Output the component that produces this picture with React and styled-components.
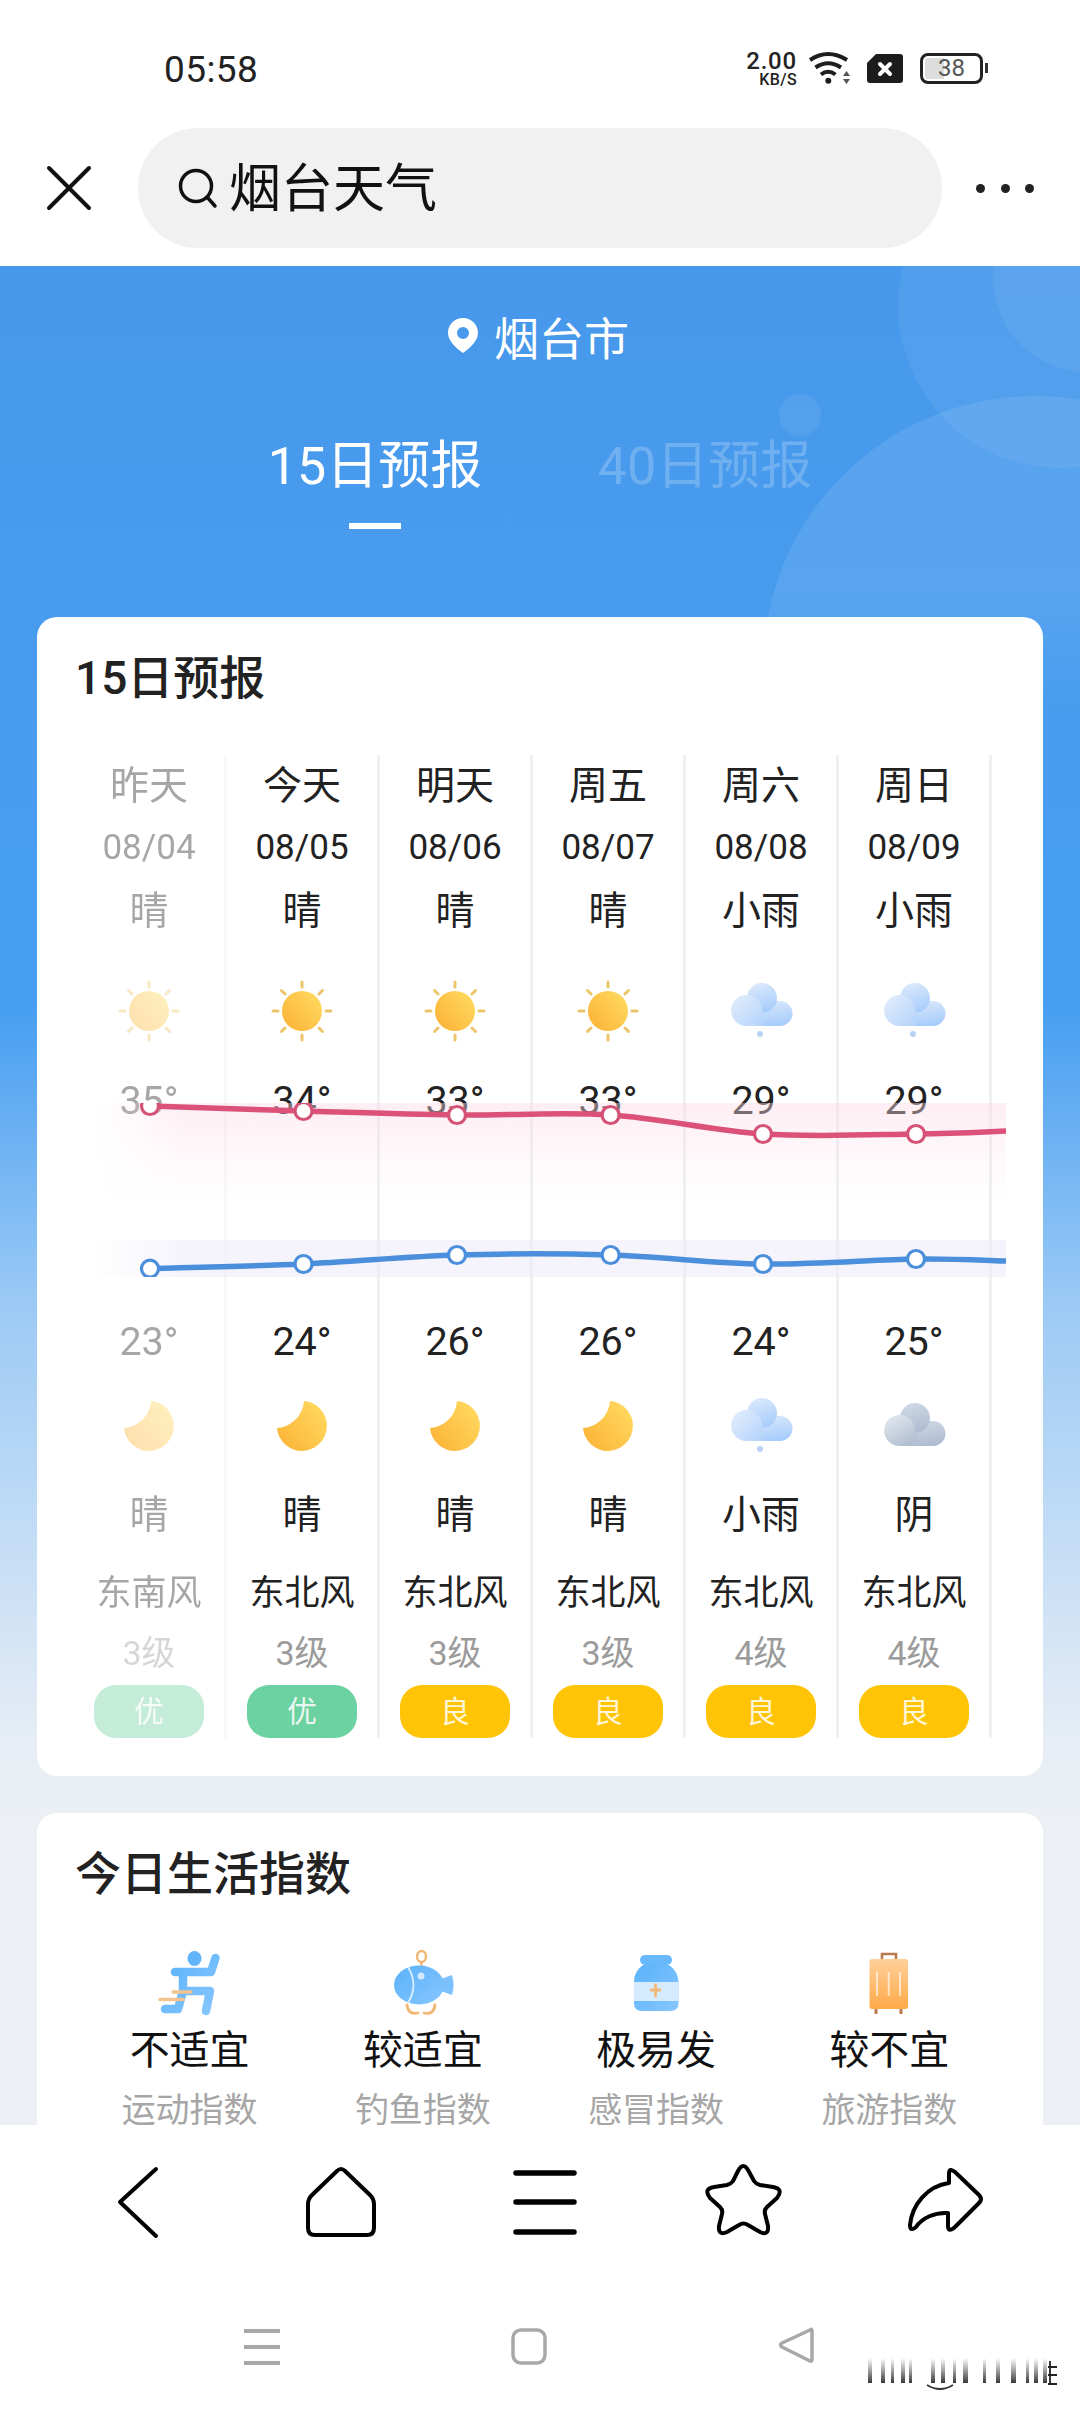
import React from "react";
import styled, { createGlobalStyle } from "styled-components";

const FONT = `Roboto, "Noto Sans CJK SC", sans-serif`;

const Global = createGlobalStyle`
  html, body { margin: 0; padding: 0; background: #fff; }
  * { box-sizing: border-box; }
  body { font-family: ${FONT}; }
`;

const Page = styled.div`
  width: 1080px;
  height: 2412px;
  display: flex;
  flex-direction: column;
  overflow: hidden;
  background: #fff;
  position: relative;
`;

/* ---------- top ---------- */
const Top = styled.header`
  height: 266px;
  flex: none;
  background: #fff;
`;
const StatusBar = styled.div`
  height: 128px;
  padding: 8px 93px 0 164px;
  display: flex;
  align-items: center;
  justify-content: space-between;
`;
const Clock = styled.span`
  font-size: 37px;
  color: #222;
  letter-spacing: 0.4px;
  margin-top: 3px;
`;
const StatusRight = styled.div`
  display: flex;
  align-items: center;
  gap: 17px;
`;
const Speed = styled.div`
  width: 50px;
  margin-right: -6px;
  display: flex;
  flex-direction: column;
  align-items: flex-end;
  color: #222;
  font-weight: 500;
`;
const SpeedValue = styled.span`
  display: block;
  height: 23px;
  font-size: 24px;
  line-height: 23px;
  letter-spacing: 0.8px;
`;
const SpeedUnit = styled.span`
  display: block;
  height: 14px;
  font-size: 16px;
  line-height: 14px;
  letter-spacing: 0.4px;
`;
const Battery = styled.div`
  position: relative;
  width: 63px;
  height: 31px;
  margin-right: 4px;
  border: 3px solid #222;
  border-radius: 8px;
  background: linear-gradient(90deg, #ddd 0, #ddd 36%, #fff 36%) content-box;
  padding: 2px;
  display: flex;
  align-items: center;
  justify-content: center;
  font-size: 24px;
  color: #555;
  &::after {
    content: "";
    position: absolute;
    right: -8px;
    top: 7px;
    width: 3px;
    height: 10px;
    background: #333;
  }
`;
const SearchRow = styled.div`
  height: 120px;
  padding-left: 46px;
  display: flex;
  align-items: center;
`;
const CloseIcon = styled.svg`
  width: 46px;
  height: 46px;
  flex: none;
  margin-right: 46px;
`;
const SearchPill = styled.div`
  width: 804px;
  height: 120px;
  flex: none;
  border-radius: 60px;
  background: #f1f1f1;
  display: flex;
  align-items: center;
  padding-left: 37px;
  gap: 8px;
`;
const SearchIcon = styled.svg`
  width: 46px;
  height: 46px;
  flex: none;
`;
const SearchText = styled.span`
  font-size: 52px;
  line-height: 60px;
  margin-top: 4px;
  color: #111;
`;
const Dots = styled.div`
  margin-left: 34px;
  display: flex;
  gap: 15.5px;
`;
const Dot = styled.span`
  width: 9px;
  height: 9px;
  border-radius: 50%;
  background: #222;
`;

/* ---------- hero ---------- */
const Hero = styled.main`
  position: relative;
  flex: none;
  height: 1859px;
  overflow: hidden;
  padding: 0 37px;
  background: linear-gradient(
    180deg,
    #4798eb 0%,
    #489ff1 40%,
    #9ccaf5 56%,
    #e8eef5 80%,
    #edf1f5 85%,
    #edf1f5 100%
  );
`;
const Decor = styled.svg`
  position: absolute;
  left: 0;
  top: 0;
  width: 1080px;
  height: 460px;
`;
const City = styled.div`
  position: relative;
  height: 60px;
  margin-top: 40px;
  padding-right: 4px;
  display: flex;
  align-items: center;
  justify-content: center;
  gap: 15px;
  color: #fff;
  font-size: 45px;
`;
const PinIcon = styled.svg`
  width: 32px;
  height: 36px;
  flex: none;
`;
const Tabs = styled.div`
  position: relative;
  margin-top: 66px;
  height: 98px;
  display: flex;
  justify-content: center;
  gap: 116px;
`;
const Tab = styled.div`
  display: flex;
  flex-direction: column;
  align-items: center;
  width: 214px;
  font-size: 52px;
  line-height: 70px;
  white-space: nowrap;
  color: ${(p) => (p.$active ? "#fff" : "rgba(255,255,255,.22)")};
`;
const TabLine = styled.span`
  width: 52px;
  height: 6px;
  margin-top: 21px;
  background: #fff;
`;
const Card = styled.section`
  position: relative;
  background: #fff;
  border-radius: 20px;
  padding: 26px 38px 38px 35px;
  margin-bottom: 37px;
`;
const Forecast = styled(Card)`
  margin-top: 87px;
`;
const CardTitle = styled.h2`
  margin: 0 0 0 3px;
  height: 70px;
  line-height: 70px;
  font-size: 46px;
  font-weight: 500;
  color: #222;
`;
const DaysArea = styled.div`
  position: relative;
  margin-top: 42px;
  padding-left: 2px;
  width: 934px;
  overflow: hidden;
  display: flex;
`;
const Day = styled.div`
  width: 153px;
  flex: none;
  display: flex;
  flex-direction: column;
  align-items: center;
  border-right: 3px solid #eef0f3;
  opacity: ${(p) => (p.$faded ? 0.4 : 1)};
  color: #222;
`;
const DayName = styled.div`
  height: 62px;
  line-height: 62px;
  font-size: 39px;
`;
const DateText = styled.div`
  height: 62px;
  line-height: 62px;
  font-size: 35px;
`;
const Cond = styled.div`
  height: ${(p) => p.$h}px;
  line-height: ${(p) => p.$h}px;
  font-size: 39px;
`;
const IconSlot = styled.div`
  height: ${(p) => p.$h}px;
  display: flex;
  align-items: center;
  justify-content: center;
`;
const WeatherSvg = styled.svg`
  width: 64px;
  height: 64px;
`;
const Temp = styled.div`
  height: 42px;
  line-height: 44px;
  font-size: 39.5px;
  margin-top: ${(p) => p.$mt || 0}px;
`;
const Wind = styled.div`
  height: 62px;
  line-height: 62px;
  margin-top: 23px;
  font-size: 35px;
  white-space: nowrap;
`;
const Level = styled.div`
  height: 54px;
  line-height: 56px;
  font-size: 34px;
  color: #9b9b9b;
`;
const Quality = styled.div`
  width: 110px;
  height: 53px;
  margin-top: 6px;
  border-radius: 22px;
  background: ${(p) => p.$bg};
  color: rgba(255, 255, 255, 0.85);
  font-size: 30px;
  line-height: 53px;
  text-align: center;
`;
const Chart = styled.svg`
  position: absolute;
  left: 0;
  top: 348px;
  width: 934px;
  height: 174px;
`;

/* ---------- life ---------- */
const LifeGrid = styled.div`
  display: grid;
  grid-template-columns: repeat(4, 233.25px);
  margin-left: 1px;
  margin-top: 40px;
`;
const LifeItem = styled.div`
  display: flex;
  flex-direction: column;
  align-items: center;
`;
const LifeIcon = styled.svg`
  width: 80px;
  height: 70px;
`;
const LifeValue = styled.div`
  margin-top: 6px;
  height: 50px;
  line-height: 52px;
  font-size: 40px;
  color: #111;
`;
const LifeLabel = styled.div`
  margin-top: 10px;
  height: 50px;
  line-height: 50px;
  font-size: 34px;
  color: #a6a6a6;
`;

/* ---------- bottom ---------- */
const Bottom = styled.footer`
  flex: 1;
  background: #fff;
`;
const Toolbar = styled.nav`
  margin-top: 35px;
  padding: 0 36.5px;
  display: grid;
  grid-template-columns: repeat(5, 203px);
  justify-items: center;
`;
const ToolIcon = styled.svg`
  width: 90px;
  height: 80px;
  fill: none;
  stroke: #000;
  stroke-width: 4;
  stroke-linecap: round;
  stroke-linejoin: round;
`;
const SystemBar = styled.nav`
  margin-top: 86px;
  padding-left: 128px;
  display: grid;
  grid-template-columns: repeat(3, 267px);
  justify-items: center;
`;
const SysIcon = styled.svg`
  width: 40px;
  height: 40px;
  fill: none;
  stroke: #a8a8a8;
  stroke-width: 3.5;
  stroke-linejoin: round;
`;
const Watermark = styled.svg`
  position: absolute;
  left: 855px;
  top: 2355px;
  width: 210px;
  height: 40px;
`;
const HiddenDefs = styled.svg`
  position: absolute;
  width: 0;
  height: 0;
`;

/* ---------- drawings ---------- */
const Defs = () => (
  <HiddenDefs aria-hidden="true">
    <defs>
      <linearGradient id="gSun" x1="0" y1="1" x2="1" y2="0.2">
        <stop offset="0" stopColor="#fbb034" />
        <stop offset="1" stopColor="#ffd95e" />
      </linearGradient>
      <linearGradient id="gCloudBack" x1="0.3" y1="0" x2="0.6" y2="1">
        <stop offset="0" stopColor="#dbe9fc" />
        <stop offset="1" stopColor="#a6ccfb" />
      </linearGradient>
      <linearGradient id="gCloudFront" x1="0" y1="0" x2="1" y2="1">
        <stop offset="0" stopColor="#e4eefc" />
        <stop offset="1" stopColor="#b4d3fb" />
      </linearGradient>
      <linearGradient id="gGreyBack" x1="0.3" y1="0" x2="0.6" y2="1">
        <stop offset="0" stopColor="#cfd9e6" />
        <stop offset="1" stopColor="#aebcd0" />
      </linearGradient>
      <linearGradient id="gGreyFront" x1="0" y1="0" x2="0.6" y2="1">
        <stop offset="0" stopColor="#e6ebf1" />
        <stop offset="1" stopColor="#b4c0d2" />
      </linearGradient>
      <linearGradient id="gBlue" x1="0" y1="0" x2="1" y2="1">
        <stop offset="0" stopColor="#5ab2fa" />
        <stop offset="1" stopColor="#86c6ff" />
      </linearGradient>
      <linearGradient id="gCase" x1="0" y1="0" x2="0" y2="1">
        <stop offset="0" stopColor="#ffd09a" />
        <stop offset="1" stopColor="#ffa948" />
      </linearGradient>
      <linearGradient id="gRed" x1="0" y1="0" x2="0" y2="1">
        <stop offset="0" stopColor="#fbd9e5" stopOpacity="0.45" />
        <stop offset="0.45" stopColor="#fbd9e5" stopOpacity="0.22" />
        <stop offset="1" stopColor="#fbd9e5" stopOpacity="0" />
      </linearGradient>
      <linearGradient id="gFade" x1="0" y1="0" x2="1" y2="0">
        <stop offset="0.025" stopColor="#fff" stopOpacity="0" />
        <stop offset="0.12" stopColor="#fff" stopOpacity="1" />
      </linearGradient>
      <linearGradient id="gStreak" x1="0" y1="0" x2="0" y2="1">
        <stop offset="0" stopColor="#333" stopOpacity="0" />
        <stop offset="1" stopColor="#222" stopOpacity="0.9" />
      </linearGradient>
      <linearGradient id="gDecor" gradientUnits="userSpaceOnUse" x1="0" y1="320" x2="0" y2="450">
        <stop offset="0" stopColor="#fff" stopOpacity="0.095" />
        <stop offset="1" stopColor="#fff" stopOpacity="0" />
      </linearGradient>
      <mask id="mFade" maskUnits="userSpaceOnUse" x="0" y="0" width="934" height="174">
        <rect width="934" height="174" fill="url(#gFade)" />
      </mask>
    </defs>
  </HiddenDefs>
);

const Sun = () => {
  const rays = [0, 45, 90, 135, 180, 225, 270, 315];
  return (
    <WeatherSvg viewBox="0 0 64 64">
      {rays.map((a) => (
        <line
          key={a}
          x1="32"
          y1="3"
          x2="32"
          y2="8"
          stroke="#ecc56a"
          strokeWidth="3"
          strokeLinecap="round"
          transform={`rotate(${a} 32 32)`}
        />
      ))}
      <circle cx="32" cy="32" r="20" fill="url(#gSun)" />
    </WeatherSvg>
  );
};

const Moon = () => (
  <WeatherSvg viewBox="0 0 64 64">
    <path d="M34 7 A25 25 0 1 1 7 34 A29 29 0 0 0 34 7 Z" fill="url(#gSun)" />
  </WeatherSvg>
);

const Cloud = ({ grey, rain, dy = 0 }) => {
  const back = grey ? "url(#gGreyBack)" : "url(#gCloudBack)";
  const front = grey ? "url(#gGreyFront)" : "url(#gCloudFront)";
  return (
    <WeatherSvg viewBox="0 0 64 64">
      <g transform={`translate(0 ${dy})`}>
        <path d="M18 47 H51 A12.5 12.5 0 0 0 51 22 L30 22 Z" fill={back} />
        <circle cx="33" cy="19" r="15" fill={back} />
        <path d="M18 47 A15.5 15.5 0 1 1 33 30 C35 36 34 47 34 47 Z" fill={front} />
      </g>
      {rain && <circle cx="31" cy="55" r="3" fill="#b8d2f4" />}
    </WeatherSvg>
  );
};

const iconFor = { sun: <Sun />, moon: <Moon />, rain: <Cloud rain />, cloud: <Cloud grey dy={5} /> };

/* Catmull-Rom through the day points */
const smooth = (pts) =>
  pts.reduce((d, [x, y], i) => {
    if (i === 0) return `M${x} ${y}`;
    const p0 = pts[Math.max(i - 2, 0)];
    const p1 = pts[i - 1];
    const p3 = pts[Math.min(i + 1, pts.length - 1)];
    const c1x = p1[0] + (x - p0[0]) / 6;
    const c1y = p1[1] + (y - p0[1]) / 6;
    const c2x = x - (p3[0] - p1[0]) / 6;
    const c2y = y - (p3[1] - p1[1]) / 6;
    return `${d} C${c1x} ${c1y} ${c2x} ${c2y} ${x} ${y}`;
  }, "");

const xs = [78, 231.5, 385, 538.6, 691, 844, 934];
const redPts = [3, 8, 12, 12, 31, 31, 28].map((y, i) => [xs[i], y]);
const bluePts = [165.6, 161, 152, 152, 161, 156, 158].map((y, i) => [xs[i], y]);

const TempChart = () => (
  <Chart viewBox="0 0 934 174">
    <g mask="url(#mFade)">
      <rect x="0" y="0" width="934" height="100" fill="url(#gRed)" />
      <rect x="20" y="137" width="914" height="37" fill="#ece9fa" fillOpacity="0.5" />
    </g>
    <path d={smooth(redPts)} fill="none" stroke="#dc5178" strokeWidth="5.5" />
    <path d={smooth(bluePts)} fill="none" stroke="#4b8fdc" strokeWidth="5.5" />
    {redPts.slice(0, 6).map(([x, y]) => (
      <circle key={x} cx={x} cy={y} r="8.5" fill="#fff" stroke="#d55277" strokeWidth="3.2" />
    ))}
    {bluePts.slice(0, 6).map(([x, y]) => (
      <circle key={x} cx={x} cy={y} r="8.5" fill="#fff" stroke="#4b8fdc" strokeWidth="3.2" />
    ))}
  </Chart>
);

const days = [
  { name: "昨天", date: "08/04", c1: "晴", i1: "sun", hi: 35, lo: 23, i2: "moon", c2: "晴", wind: "东南风", lv: "3级", q: "优", faded: true },
  { name: "今天", date: "08/05", c1: "晴", i1: "sun", hi: 34, lo: 24, i2: "moon", c2: "晴", wind: "东北风", lv: "3级", q: "优" },
  { name: "明天", date: "08/06", c1: "晴", i1: "sun", hi: 33, lo: 26, i2: "moon", c2: "晴", wind: "东北风", lv: "3级", q: "良" },
  { name: "周五", date: "08/07", c1: "晴", i1: "sun", hi: 33, lo: 26, i2: "moon", c2: "晴", wind: "东北风", lv: "3级", q: "良" },
  { name: "周六", date: "08/08", c1: "小雨", i1: "rain", hi: 29, lo: 24, i2: "rain", c2: "小雨", wind: "东北风", lv: "4级", q: "良" },
  { name: "周日", date: "08/09", c1: "小雨", i1: "rain", hi: 29, lo: 25, i2: "cloud", c2: "阴", wind: "东北风", lv: "4级", q: "良" },
];

const RunnerIcon = () => (
  <LifeIcon viewBox="0 0 80 70">
    <ellipse cx="44.5" cy="9.5" rx="7" ry="7.5" fill="#62b5fb" />
    <path
      d="M65.5 9 L61 23 H25 M33 24 L33 42 H60 L56 62 M33 42 L28 60 H15"
      fill="none"
      stroke="url(#gBlue)"
      strokeWidth="8.5"
      strokeLinecap="round"
      strokeLinejoin="round"
    />
    <path d="M23 43 H41 M10 50.5 H33" stroke="#f3c48f" strokeWidth="3.5" strokeLinecap="round" />
  </LifeIcon>
);

const FishIcon = () => (
  <LifeIcon viewBox="0 0 80 70">
    <ellipse cx="38.5" cy="7.5" rx="4.5" ry="5.5" fill="none" stroke="#f2b777" strokeWidth="2.4" />
    <path d="M38.500 13 V19" stroke="#f2b777" strokeWidth="2.4" />
    <path d="M58 30 L69 26 Q72 36 69 46 L58 42 Z" fill="#7cc0fd" />
    <ellipse cx="36" cy="36" rx="25" ry="19.5" fill="url(#gBlue)" />
    <path d="M25 18 Q36 36 25 54" fill="none" stroke="#dceeff" strokeWidth="1.8" />
    <circle cx="38" cy="27" r="3.5" fill="#d2e9ff" />
    <path d="M24 56 Q25 66 35 64 M52 56 Q51 66 41 64" fill="none" stroke="#f2b777" strokeWidth="2.8" strokeLinecap="round" />
  </LifeIcon>
);

const BottleIcon = () => (
  <LifeIcon viewBox="0 0 80 70">
    <rect x="24" y="6" width="32" height="10" rx="5" fill="#68b8fc" />
    <path d="M27 16 H53 Q62 22 62.500 33 V54 Q62.500 62 54 62 H26 Q18 62 18 54 V33 Q18 22 27 16 Z" fill="url(#gBlue)" />
    <rect x="18" y="33" width="44.500" height="19" fill="#d5ebff" />
    <path d="M39.500 36 V47 M35 41 H44" stroke="#f2b777" strokeWidth="2.8" strokeLinecap="round" />
  </LifeIcon>
);

const SuitcaseIcon = () => (
  <LifeIcon viewBox="0 0 80 70">
    <path d="M33 11 V5 H47 V11" fill="none" stroke="#b77a4c" strokeWidth="2.600" />
    <path d="M27 58 V65 M52 58 V65" stroke="#b77a4c" strokeWidth="3" />
    <rect x="20.500" y="10" width="38.500" height="50" rx="2.500" fill="url(#gCase)" />
    <path d="M28 23 V47 M39.700 23 V47 M51 23 V47" stroke="#fff" strokeOpacity="0.6" strokeWidth="2" />
  </LifeIcon>
);

const streaks = [
  [13, 4], [26, 4], [36, 3], [46, 4], [54, 3], [76, 4], [86, 4], [98, 3], [108, 5], [128, 3],
  [141, 4], [156, 5], [171, 3], [179, 4], [188, 4],
];

const lifeItems = [
  { icon: <RunnerIcon />, value: "不适宜", label: "运动指数" },
  { icon: <FishIcon />, value: "较适宜", label: "钓鱼指数" },
  { icon: <BottleIcon />, value: "极易发", label: "感冒指数" },
  { icon: <SuitcaseIcon />, value: "较不宜", label: "旅游指数" },
];

export default function App() {
  return (
    <Page>
      <Global />
      <Defs />
      <Top>
        <StatusBar>
          <Clock>05:58</Clock>
          <StatusRight>
            <Speed>
              <SpeedValue>2.00</SpeedValue>
              <SpeedUnit>KB/S</SpeedUnit>
            </Speed>
            <svg width="42" height="34" viewBox="0 0 42 34">
              <path d="M2 9 Q20 -3 39 9 M7.500 16.500 Q20 8 33 16.500 M13 23.500 Q20 18 27.500 23.500" fill="none" stroke="#1d1d1d" strokeWidth="4" />
              <circle cx="20.300" cy="29.700" r="3" fill="#1d1d1d" />
              <path d="M38.500 20 L42 25 H35 Z M38.500 33 L42 28 H35 Z" fill="#555" />
            </svg>
            <svg width="36" height="29" viewBox="0 0 36 29">
              <path d="M9 0 H33 Q36 0 36 3 V26 Q36 29 33 29 H3 Q0 29 0 26 V9 Z" fill="#1c1c1c" />
              <path d="M13 10 L23 20 M23 10 L13 20" stroke="#fff" strokeWidth="4" strokeLinecap="round" />
            </svg>
            <Battery>38</Battery>
          </StatusRight>
        </StatusBar>
        <SearchRow>
          <CloseIcon viewBox="0 0 46 46">
            <path d="M3 3 L43 43 M43 3 L3 43" stroke="#111" strokeWidth="4" strokeLinecap="round" />
          </CloseIcon>
          <SearchPill>
            <SearchIcon viewBox="0 0 46 46">
              <circle cx="21" cy="21" r="15.500" fill="none" stroke="#111" strokeWidth="3.500" />
              <path d="M32 32 L40 41" stroke="#111" strokeWidth="3.500" strokeLinecap="round" />
            </SearchIcon>
            <SearchText>烟台天气</SearchText>
          </SearchPill>
          <Dots>
            <Dot />
            <Dot />
            <Dot />
          </Dots>
        </SearchRow>
      </Top>

      <Hero>
        <Decor viewBox="0 0 1080 460">
          <circle cx="1060" cy="40" r="162" fill="#fff" fillOpacity="0.06" />
          <circle cx="1087" cy="12" r="94" fill="#fff" fillOpacity="0.06" />
          <circle cx="1035" cy="402" r="272" fill="url(#gDecor)" />
          <circle cx="800" cy="149" r="21" fill="#fff" fillOpacity="0.07" />
        </Decor>
        <City>
          <PinIcon viewBox="0 0 32 36">
            <path fillRule="evenodd" d="M16 0 C25 0 31 7 31 15 C31 23 22 31 16 35 C10 31 1 23 1 15 C1 7 7 0 16 0 Z M16 9 A6 6 0 1 0 16 21 A6 6 0 1 0 16 9 Z" fill="#fff" />
          </PinIcon>
          烟台市
        </City>
        <Tabs>
          <Tab $active>
            15日预报
            <TabLine />
          </Tab>
          <Tab>40日预报</Tab>
        </Tabs>

        <Forecast>
          <CardTitle>15日预报</CardTitle>
          <DaysArea>
            {days.map((d) => (
              <Day key={d.date} $faded={d.faded}>
                <DayName>{d.name}</DayName>
                <DateText>{d.date}</DateText>
                <Cond $h={64}>{d.c1}</Cond>
                <IconSlot $h={136}>{iconFor[d.i1]}</IconSlot>
                <Temp>{d.hi}°</Temp>
                <Temp $mt={199}>{d.lo}°</Temp>
                <IconSlot $h={128}>{iconFor[d.i2]}</IconSlot>
                <Cond $h={50}>{d.c2}</Cond>
                <Wind>{d.wind}</Wind>
                <Level>{d.lv}</Level>
                <Quality $bg={d.q === "优" ? "#6dd2a1" : "#ffc405"}>{d.q}</Quality>
              </Day>
            ))}
            <TempChart />
          </DaysArea>
        </Forecast>

        <Card>
          <CardTitle>今日生活指数</CardTitle>
          <LifeGrid>
            {lifeItems.map((it) => (
              <LifeItem key={it.label}>
                {it.icon}
                <LifeValue>{it.value}</LifeValue>
                <LifeLabel>{it.label}</LifeLabel>
              </LifeItem>
            ))}
          </LifeGrid>
        </Card>
      </Hero>

      <Bottom>
        <Toolbar>
          <ToolIcon viewBox="0 0 90 80">
            <path d="M63 9 L27 42 L63 76" />
          </ToolIcon>
          <ToolIcon viewBox="0 0 90 80">
            <path d="M41 11 Q45 7 49 11 L74 35 Q78 39 78 44 V68 Q78 75 71 75 H19 Q12 75 12 68 V44 Q12 39 16 35 Z" />
          </ToolIcon>
          <ToolIcon viewBox="0 0 90 80">
            <path d="M17 13 H75 M17 42 H75 M17 72 H75" strokeWidth="5.500" />
          </ToolIcon>
          <ToolIcon viewBox="0 0 90 80">
            <path d="M36 11 Q41.300 1 46.600 11 L52 21 Q54 24 58 25 L71 27 Q82 29 75 38 L65 47 Q62 50 63 54 L66 66 Q67 76 58 72 L46 65 Q41.300 62 37 65 L25 72 Q16 76 17 66 L20 54 Q21 50 18 47 L8 38 Q1 29 12 27 L25 25 Q29 24 31 21 Z" />
          </ToolIcon>
          <ToolIcon viewBox="0 0 90 80">
            <path d="M44 14 Q44 7 50 12 L74 35 Q78 39 74 43 L50 67 Q43 73 43 66 V53 C30 52 17 58 11 67 Q5 72 5 65 C7 45 22 26 44 23 Z" />
          </ToolIcon>
        </Toolbar>
        <SystemBar>
          <SysIcon viewBox="0 0 40 40">
            <path d="M2 5 H38 M2 21 H38 M2 37 H38" strokeWidth="4" />
          </SysIcon>
          <SysIcon viewBox="0 0 40 40">
            <rect x="4" y="4" width="32" height="33" rx="8" />
          </SysIcon>
          <SysIcon viewBox="0 0 40 40">
            <path d="M34 5 Q36 3 36 6 V34 Q36 37 34 36 L6 22 Q3 20 6 18 Z" transform="translate(0 -1)" />
          </SysIcon>
        </SystemBar>
      </Bottom>
      <Watermark viewBox="0 0 210 40">
        {streaks.map(([x, w]) => (
          <rect key={x} x={x} y="3" width={w} height="25" fill="url(#gStreak)" />
        ))}
        <path d="M72 30 Q85 38 98 30" fill="none" stroke="#333" strokeWidth="1.800" />
        <path d="M193 12 H202 M193 20 H202 M193 29 H202 M195 6 V29" stroke="#222" strokeWidth="1.800" fill="none" />
      </Watermark>
    </Page>
  );
}
